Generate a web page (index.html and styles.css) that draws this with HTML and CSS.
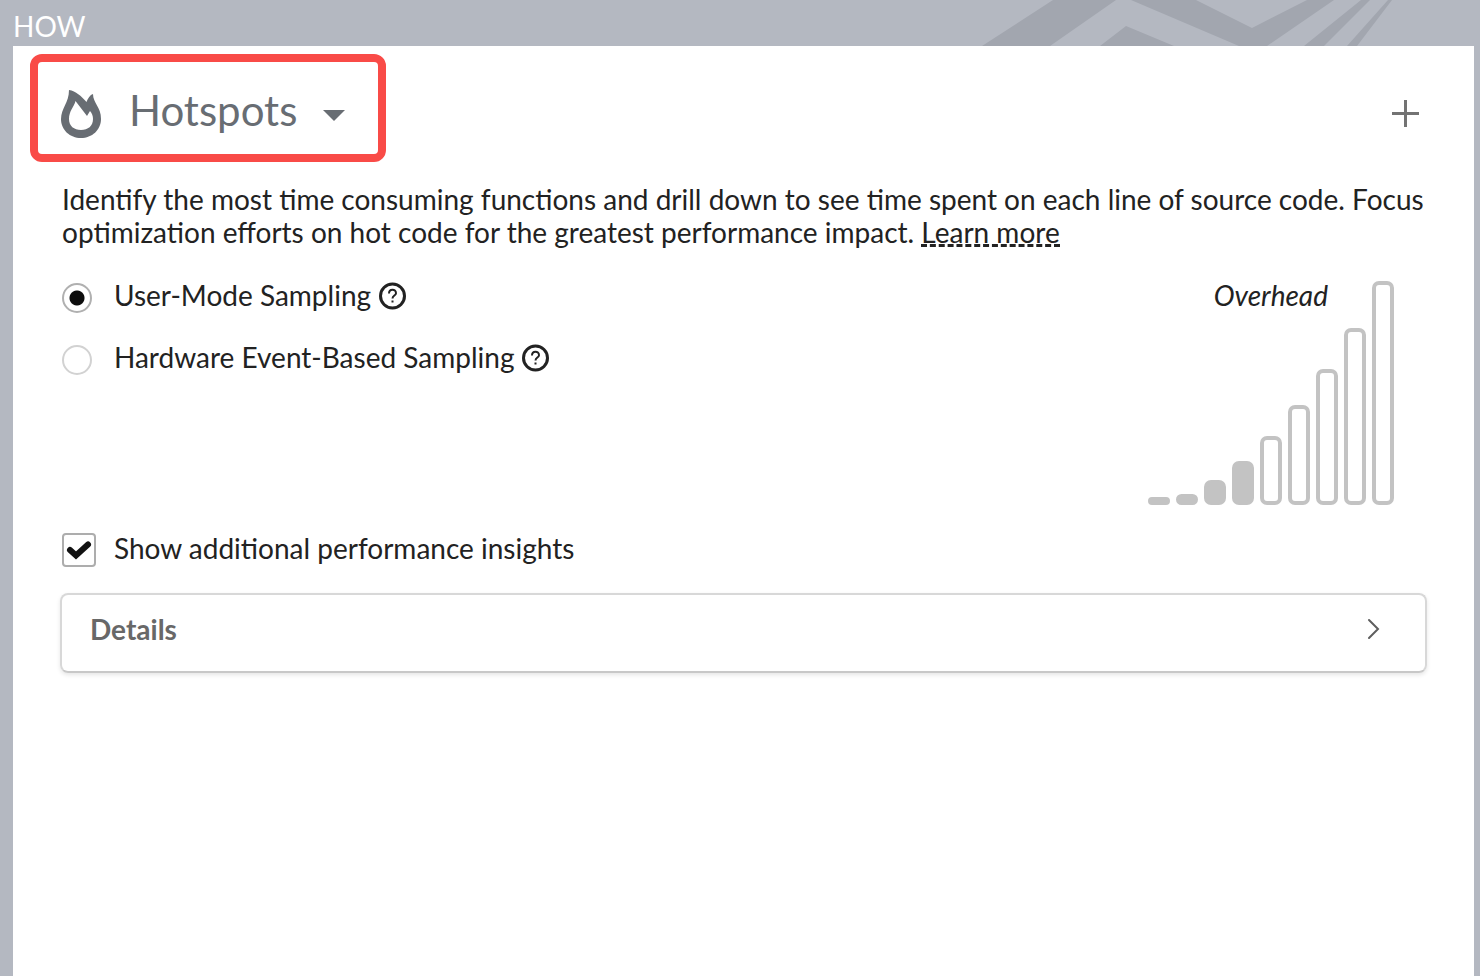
FILE: index.html
```html
<!DOCTYPE html>
<html lang="en">
<head>
<meta charset="utf-8">
<title>Hotspots</title>
<link rel="stylesheet" href="styles.css">
</head>
<body>
<header class="topbar">
  <h1 class="topbar-title">HOW</h1>
  <svg class="topbar-art" width="498" height="46" viewBox="982 0 498 46" aria-hidden="true">
    <path d="M982 46L1053 0H1116L1050 46ZM1100 46L1126 26L1174 46ZM1131 0H1196L1252 28L1307 0H1334L1267 46H1239ZM1304 46L1361 0H1370L1324 46ZM1347 46L1388 0H1392L1357 46Z"/>
  </svg>
</header>
<main class="panel">
  <div class="title-row">
    <button class="analysis-type" type="button">
      <svg class="flame" width="40" height="48" viewBox="0 0 40 48" aria-hidden="true">
        <path fill-rule="evenodd" d="M8 0C15 1 20 6 25.500 12C27 8 29 5 32 4C32 13 40 17 40 29C40 40 31 48 20 48C9 48 0 40 0 29C0 18 8 13 8 0ZM14.500 11C13 17 8 21 8 29C8 36 13 40 20 40C27 40 32 36 32 29C32 26 31 23 29 21L26 26Z"/>
      </svg>
      <span class="analysis-name">Hotspots</span>
      <svg class="caret" width="22" height="12" viewBox="0 0 22 12" aria-hidden="true"><path d="M0 0H22L11 11Z"/></svg>
    </button>
    <button class="add" type="button" aria-label="Add">
      <svg width="27" height="27" viewBox="0 0 27 27" aria-hidden="true"><path d="M0 13.500H27M13.500 0V27"/></svg>
    </button>
  </div>
  <p class="description">Identify the most time consuming functions and drill down to see time spent on each line of source code. Focus optimization efforts on hot code for the greatest performance impact. <a class="learn" href="#">Learn more</a></p>
  <div class="sampling">
    <div class="modes">
      <div class="option">
        <input class="radio" type="radio" name="mode" id="user" checked>
        <label for="user">User-Mode Sampling</label>
        <svg class="help" width="28" height="28" viewBox="0 0 28 28" aria-hidden="true"><circle cx="13.500" cy="14" r="12"/><path d="M10 11.500C10 6.500 17 6.500 17 11.200C17 13.500 13.500 13.700 13.500 16.500M13.500 18.500V20.500"/></svg>
      </div>
      <div class="option">
        <input class="radio" type="radio" name="mode" id="hardware">
        <label for="hardware">Hardware Event-Based Sampling</label>
        <svg class="help" width="28" height="28" viewBox="0 0 28 28" aria-hidden="true"><circle cx="13.500" cy="14" r="12"/><path d="M10 11.500C10 6.500 17 6.500 17 11.200C17 13.500 13.500 13.700 13.500 16.500M13.500 18.500V20.500"/></svg>
      </div>
    </div>
    <div class="overhead">
      <span class="overhead-label">Overhead</span>
      <div class="bars">
        <span class="bar full" style="height:8px"></span>
        <span class="bar full" style="height:11px"></span>
        <span class="bar full" style="height:25px"></span>
        <span class="bar full" style="height:44px"></span>
        <span class="bar" style="height:69px"></span>
        <span class="bar" style="height:100px"></span>
        <span class="bar" style="height:136px"></span>
        <span class="bar" style="height:177px"></span>
        <span class="bar" style="height:224px"></span>
      </div>
    </div>
  </div>
  <div class="insights">
    <span class="check">
      <input class="checkbox" type="checkbox" id="insights" checked>
      <svg class="tick" width="34" height="34" viewBox="0 0 34 34" aria-hidden="true"><path d="M8 17L14 22.500L26 11.500"/></svg>
    </span>
    <label for="insights">Show additional performance insights</label>
  </div>
  <button class="details" type="button">
    <span>Details</span>
    <svg width="14" height="22" viewBox="0 0 14 22" aria-hidden="true"><path d="M2 2L11 11L2 20"/></svg>
  </button>
</main>
</body>
</html>
```
FILE: styles.css
```css
* {
  box-sizing: border-box;
}

body {
  display: flex;
  flex-direction: column;
  min-height: 100vh;
  margin: 0;
  background: #b4b8c1;
  color: #222;
  font: 28px/33px Lato, sans-serif;
}

.topbar {
  display: flex;
  justify-content: space-between;
  height: 46px;
  padding-left: 13px;
}

.topbar-title {
  margin: 0;
  padding-top: 10px;
  color: #fff;
  font-size: 28px;
  font-weight: 400;
  line-height: 33px;
}

.topbar-art {
  fill: #a2a6af;
}

.panel {
  flex: 1;
  margin: 0 6px 0 13px;
  padding: 8px 47px 32px;
  background: #fff;
}

.title-row {
  display: flex;
  align-items: center;
  justify-content: space-between;
  margin-left: -30px;
}

button {
  border: 0;
  background: none;
  font: inherit;
  cursor: pointer;
}

.analysis-type {
  display: flex;
  align-items: center;
  height: 108px;
  padding: 0 33px 0 23px;
  border: 8px solid #f94b47;
  border-radius: 12px;
  color: #686d73;
  fill: #686d73;
}

.flame {
  margin-top: 12px;
}

.analysis-name {
  margin: 0 26px 0 28px;
  padding-top: 4px;
  font-size: 42px;
  line-height: 52px;
}

.caret {
  margin-top: 16px;
}

.add {
  display: flex;
  margin-top: 10px;
  padding: 0 8px;
  fill: none;
  stroke: #737373;
  stroke-width: 3;
}

.description {
  margin: 0;
  padding: 21px 0 0 2px;
}

.learn {
  display: inline-block;
  border-bottom: 3px dashed #222;
  color: inherit;
  line-height: 24px;
  text-decoration: none;
}

.sampling {
  display: flex;
  justify-content: space-between;
  padding: 32px 33px 0 2px;
}

.modes {
  display: flex;
  flex-direction: column;
  gap: 29px;
}

.option {
  display: flex;
  align-items: center;
  height: 33px;
}

label {
  padding-bottom: 4px;
}

.radio {
  width: 30px;
  height: 30px;
  margin: 0 22px 0 0;
  border: 2px solid #d2d2d2;
  border-radius: 50%;
  appearance: none;
}

.radio:checked {
  border-color: #b0b0b0;
  background: radial-gradient(circle, #0d0d0d 7px, transparent 8px);
}

.help {
  margin: 0 0 4px 8px;
  fill: none;
  stroke: #222;
  stroke-width: 3;
}

.help path {
  stroke-width: 2;
}

.overhead {
  display: flex;
  align-items: flex-start;
}

.overhead-label {
  margin-right: -180px;
  font-style: italic;
  line-height: 28px;
}

.bars {
  display: flex;
  align-items: flex-end;
  gap: 6px;
}

.bar {
  width: 22px;
  border: 4px solid #c3c3c3;
  border-radius: 7px;
}

.full {
  background: #c3c3c3;
}

.insights {
  display: flex;
  align-items: center;
  gap: 18px;
  height: 62px;
  padding: 28px 0 0 2px;
}

.check {
  display: grid;
}

.checkbox,
.tick {
  grid-area: 1 / 1;
  width: 34px;
  height: 34px;
  margin: 0;
}

.checkbox {
  border: 2px solid #adadad;
  border-radius: 4px;
  appearance: none;
}

.tick {
  fill: none;
  stroke: #111;
  stroke-linecap: round;
  stroke-width: 6;
  pointer-events: none;
}

.details {
  display: flex;
  align-items: center;
  justify-content: space-between;
  width: 100%;
  height: 80px;
  margin-top: 26px;
  padding: 0 44px 8px 28px;
  border: 2px solid #d8d8d8;
  border-bottom-color: #c8c8c8;
  border-radius: 8px;
  box-shadow: 0 2px 4px #0000001a;
  color: #686868;
  font-weight: 700;
}

.details svg {
  fill: none;
  stroke: #5e5e5e;
  stroke-linecap: round;
  stroke-width: 2;
}
```
